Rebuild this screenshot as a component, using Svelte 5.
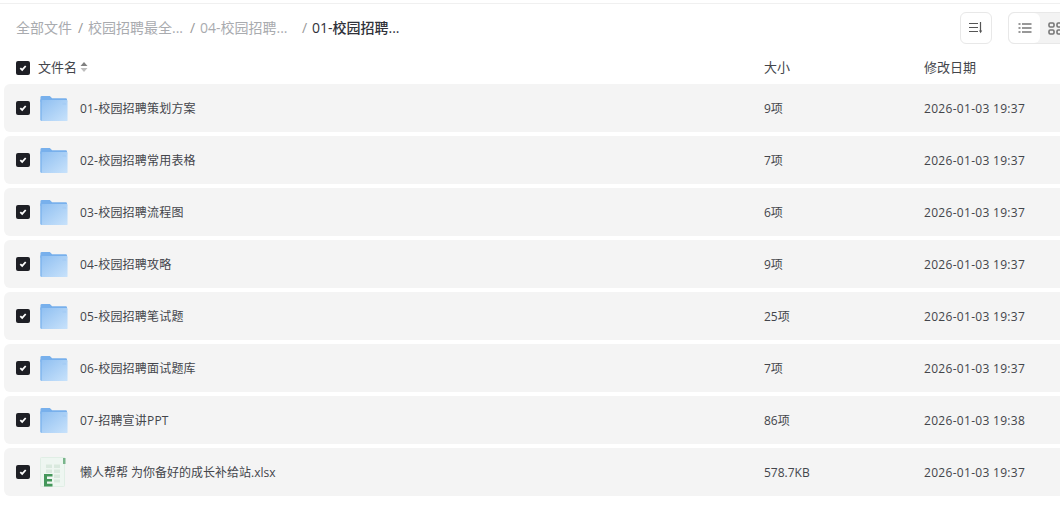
<script>
  const crumbs = [
    { name: "全部文件", width: 60 },
    { name: "校园招聘最全...", width: 100 },
    { name: "04-校园招聘...", width: 100 },
  ];

  const rows = [
    { name: "01-校园招聘策划方案", size: "9项", date: "2026-01-03 19:37" },
    { name: "02-校园招聘常用表格", size: "7项", date: "2026-01-03 19:37" },
    { name: "03-校园招聘流程图", size: "6项", date: "2026-01-03 19:37" },
    { name: "04-校园招聘攻略", size: "9项", date: "2026-01-03 19:37" },
    { name: "05-校园招聘笔试题", size: "25项", date: "2026-01-03 19:37" },
    { name: "06-校园招聘面试题库", size: "7项", date: "2026-01-03 19:37" },
    { name: "07-招聘宣讲PPT", size: "86项", date: "2026-01-03 19:38" },
    { name: "懒人帮帮 为你备好的成长补给站.xlsx", size: "578.7KB", date: "2026-01-03 19:37", sheet: true },
  ];
</script>

{#snippet check()}
  <span class="check">
    <svg width="14" height="14" viewBox="0 0 14 14"><path d="M4.300 7.100 6.200 8.900l3.500-3.900" fill="none" stroke="#fff" stroke-width="1.800" /></svg>
  </span>
{/snippet}

<div class="page">
  <div class="toolbar">
    <nav class="crumbs">
      {#each crumbs as c}
        <span class="crumb" style="width: {c.width}px">{c.name}</span>
        <span class="sep">/</span>
      {/each}
      <span class="current">01-校园招聘...</span>
    </nav>
    <div class="tools">
      <button class="sort" aria-label="排序">
        <svg width="14" height="12" viewBox="0 0 14 12">
          <path d="M0 1.500h9M0 5.500h9M0 9.500h9M11.500 0v9" fill="none" stroke="#555" stroke-width="1.200" />
          <path d="M10 8.500h3.200l-1.600 2.800z" fill="#555" />
        </svg>
      </button>
      <div class="view">
        <span class="view-btn on">
          <svg width="14" height="12" viewBox="0 0 14 12">
            <path d="M0.500 2h2M4 2h9.500M0.500 6h2M4 6h9.500M0.500 10h2M4 10h9.500" fill="none" stroke="#333" stroke-width="1.200" />
          </svg>
        </span>
        <span class="view-btn">
          <svg width="15" height="13" viewBox="0 0 15 13">
            <g fill="none" stroke="#777" stroke-width="1.600">
              <rect x="1" y="1" width="5" height="4" rx="1.200" />
              <rect x="9" y="1" width="5" height="4" rx="1.200" />
              <rect x="1" y="8" width="5" height="4" rx="1.200" />
              <rect x="9" y="8" width="5" height="4" rx="1.200" />
            </g>
          </svg>
        </span>
      </div>
    </div>
  </div>

  <div class="head">
    {@render check()}
    <div class="head-name">
      文件名
      <svg width="8" height="12" viewBox="0 0 8 12">
        <path d="M4 1 7.500 5H.5z" fill="#808080" />
        <path d="M4 11 .5 7h7z" fill="#bdbdbd" />
      </svg>
    </div>
    <div class="size-col">大小</div>
    <div class="date-col">修改日期</div>
  </div>

  <div class="list">
    {#each rows as row}
      <div class="row">
        {@render check()}
        <span class="icon">
          {#if row.sheet}
            <svg width="26" height="31" viewBox="0 0 26 31">
              <path d="M1.500.5h23v28a1 1 0 0 1-1 1h-22a1 1 0 0 1-1-1V1.500a1 1 0 0 1 1-1z" fill="#eef6f1" stroke="#e0eee5" />
              <path d="M23 1h2.500v6H23z" fill="#79b58b" />
              <path d="M6 7.500h6v3.500H6zM14 7.500h6v3.500h-6zM6 12.500h6v3.500H6zM14 12.500h6v3.500h-6zM14 17.500h6v3.500h-6zM14 22.500h6v3H14z" fill="#d9e9de" />
              <path d="M4 17h8.500v2.600H7v2.400h5v2.500H7v2.300h5.500V29.400H4z" fill="#44975a" />
            </svg>
          {:else}
            <svg class="folder" width="29" height="27" viewBox="0 0 30 28">
              <defs>
                <linearGradient id="fold" x1="0" y1="0" x2="1" y2="1">
                  <stop offset="0" stop-color="#8fbff1" />
                  <stop offset="1" stop-color="#c8e2fb" />
                </linearGradient>
              </defs>
              <path d="M.5 2A1.500 1.500 0 0 1 2 .500h8.500L13 3h14.500A1.500 1.500 0 0 1 29 4.500V7H.5z" fill="#78b0ec" />
              <path d="M.5 5h28a1 1 0 0 1 1 1v20.500a1 1 0 0 1-1 1H2A1.500 1.500 0 0 1 .5 26z" fill="url(#fold)" />
              <path d="M.5 4h1.200v23.300A1.500 1.500 0 0 1 .5 26z" fill="#78b0ec" />
              <path d="M24 8h4v2h-4z" fill="#a6cdf5" />
            </svg>
          {/if}
        </span>
        <div class="name-col" class:plain={row.sheet}>{row.name}</div>
        <div class="size-col">{row.size}</div>
        <div class="date-col">{row.date}</div>
      </div>
    {/each}
  </div>
</div>

<style>
  :global(body) {
    margin: 0;
    background: #fff;
  }

  .page {
    width: 1060px;
    height: 507px;
    overflow: hidden;
    box-sizing: border-box;
    border-top: 1px solid #f0f0f0;
    margin-top: 3px;
    font-family: "Open Sans", "Noto Sans CJK SC", sans-serif;
    font-size: 12px;
    color: #43454b;
  }

  .toolbar {
    height: 48px;
    display: flex;
    align-items: center;
    justify-content: space-between;
    padding-left: 16px;
  }

  .crumbs {
    display: flex;
    align-items: center;
    font-size: 14px;
    line-height: 20px;
    margin-top: -1px;
    color: #a9abaf;
  }

  .crumb {
    white-space: nowrap;
  }

  .sep {
    width: 12px;
    padding-left: 2px;
    box-sizing: border-box;
    color: #999;
  }

  .current {
    color: #30323a;
    font-weight: 500;
  }

  .tools {
    display: flex;
    align-items: center;
    gap: 16px;
    flex: none;
    margin-right: -12px;
  }

  .sort {
    width: 32px;
    height: 32px;
    padding: 0;
    background: #fff;
    border: 1px solid #e8e8e8;
    border-radius: 6px;
    display: flex;
    align-items: center;
    justify-content: center;
  }

  .view {
    flex: none;
    width: 64px;
    height: 32px;
    box-sizing: border-box;
    border: 1px solid #e8e8e8;
    border-radius: 6px;
    background: #f3f3f3;
    display: flex;
  }

  .view-btn {
    width: 31px;
    display: flex;
    align-items: center;
    justify-content: center;
  }

  .view-btn.on {
    background: #fff;
    border-radius: 6px;
  }

  .head,
  .row {
    display: flex;
    align-items: center;
  }

  .head {
    height: 32px;
    padding-left: 16px;
    font-size: 13px;
    line-height: 18px;
  }

  .head > div {
    margin-top: -2px;
  }

  .head-name {
    margin-left: 8px;
    width: 726px;
    flex: none;
    display: flex;
    align-items: center;
    gap: 3px;
  }

  .list {
    display: flex;
    flex-direction: column;
    gap: 4px;
    margin-left: 4px;
  }

  .row {
    height: 48px;
    flex: none;
    padding-left: 12px;
    background: #f4f4f4;
    border-radius: 6px 0 0 6px;
  }

  .check {
    flex: none;
    width: 14px;
    height: 14px;
    background: #1e1f25;
    border-radius: 2px;
    display: flex;
  }

  .icon {
    flex: none;
    width: 30px;
    margin-left: 8px;
    display: flex;
    align-items: center;
    justify-content: center;
  }

  .folder {
    margin-left: 2px;
  }

  .name-col {
    flex: none;
    width: 684px;
    margin-left: 12px;
    letter-spacing: 0.200px;
  }

  .name-col.plain {
    letter-spacing: 0;
  }

  .size-col {
    width: 160px;
    flex: none;
  }

  .date-col {
    flex: none;
  }

  .row .date-col {
    letter-spacing: 0.300px;
  }
</style>
